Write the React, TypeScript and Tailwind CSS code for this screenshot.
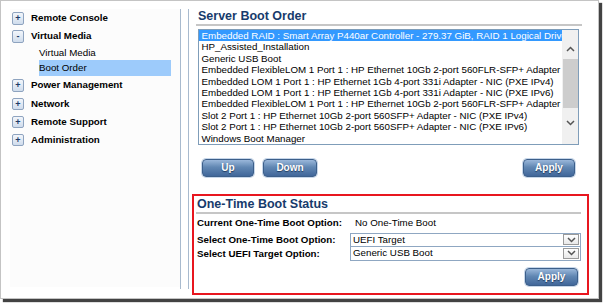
import React from "react";

const NAV = [
  { label: "Remote Console", open: false, h: "h-[18.5px]" },
  { label: "Virtual Media", open: true, h: "h-[17.5px]" },
];

const NAV_REST = [
  { label: "Power Management", h: "h-[19.5px]" },
  { label: "Network", h: "h-[18px]" },
  { label: "Remote Support", h: "h-[18px]" },
  { label: "Administration", h: "h-[18px]" },
];

const BOOT_ITEMS = [
  "Embedded RAID : Smart Array P440ar Controller - 279.37 GiB, RAID 1 Logical Drive",
  "HP_Assisted_Installation",
  "Generic USB Boot",
  "Embedded FlexibleLOM 1 Port 1 : HP Ethernet 10Gb 2-port 560FLR-SFP+ Adapter - NIC (PXE IPv4)",
  "Embedded LOM 1 Port 1 : HP Ethernet 1Gb 4-port 331i Adapter - NIC (PXE IPv4)",
  "Embedded LOM 1 Port 1 : HP Ethernet 1Gb 4-port 331i Adapter - NIC (PXE IPv6)",
  "Embedded FlexibleLOM 1 Port 1 : HP Ethernet 10Gb 2-port 560FLR-SFP+ Adapter - NIC (PXE IPv6)",
  "Slot 2 Port 1 : HP Ethernet 10Gb 2-port 560SFP+ Adapter - NIC (PXE IPv4)",
  "Slot 2 Port 1 : HP Ethernet 10Gb 2-port 560SFP+ Adapter - NIC (PXE IPv6)",
  "Windows Boot Manager",
];

// small +/- box used by the tree nav
function ToggleBox({ open }: { open: boolean }) {
  return (
    <span className="w-[12px] h-[12.5px] mr-[7px] rounded-[2px] border border-[#8ea3bf] bg-[linear-gradient(#f2f6fb,#cfdcec)] flex items-center justify-center text-[#1b3a66] text-[9px] font-bold leading-none">
      {open ? "-" : "+"}
    </span>
  );
}

function Chevron({ up = false }: { up?: boolean }) {
  return (
    <svg width="9" height="6" viewBox="0 0 9 6">
      <polyline
        points={up ? "1,5 4.5,1.5 8,5" : "1,1 4.5,4.5 8,1"}
        fill="none"
        stroke="#555"
        strokeWidth="1.5"
      />
    </svg>
  );
}

function BlueButton({ label, w }: { label: string; w: string }) {
  return (
    <button
      className={`${w} h-[18px] rounded-[4px] border border-[#3c5f8a] shadow-[0_0_0_1px_#c7d7ea] bg-[linear-gradient(#9ab7da,#6187b3_45%,#41679a)] text-white text-[10px] font-bold leading-none [text-shadow:0_1px_1px_#1f3a5e]`}
    >
      {label}
    </button>
  );
}

function SelectBox({ value, extra = "" }: { value: string; extra?: string }) {
  return (
    <div className={`w-[231px] h-[14.5px] border border-[#8fa7c2] bg-white flex items-center ${extra}`}>
      <span className="flex-1 pl-[2px] text-[9.75px] leading-none text-black">{value}</span>
      <span className="w-[16px] h-[11px] mr-[1px] border border-[#9a9a9a] bg-[linear-gradient(#ffffff,#e9e9e9)] flex items-center justify-center">
        <Chevron />
      </span>
    </div>
  );
}

export default function App() {
  return (
    <div className="w-[604px] h-[304px] bg-white font-['Liberation_Sans',Arial,sans-serif] text-black">
      <div className="w-[599px] h-[299px] border border-[#c4c4c4] bg-white shadow-[3px_3px_1px_rgba(45,45,45,0.9)] flex">
        {/* ── Tree navigation ── */}
        <div className="w-[179px] pt-[8px]">
          <div className="ml-[9px] h-[278px] bg-[#fcfcfc]">
            {NAV.map(n => (
              <div key={n.label} className={`${n.h} pl-[2px] flex items-center`}>
                <ToggleBox open={n.open} />
                <span className="text-[9.75px] font-bold leading-none">{n.label}</span>
              </div>
            ))}
            <div className="h-[15px] ml-[29px] flex items-center text-[9.75px] leading-none">Virtual Media</div>
            <div className="h-[15.5px] ml-[29px] w-[132px] bg-[#9dcbfb] flex items-center text-[9.75px] leading-none">
              Boot Order
            </div>
            {NAV_REST.map(n => (
              <div key={n.label} className={`${n.h} pl-[2px] flex items-center`}>
                <ToggleBox open={false} />
                <span className="text-[9.75px] font-bold leading-none">{n.label}</span>
              </div>
            ))}
          </div>
        </div>

        {/* frame divider */}
        <div className="w-[9px] pt-[8px] flex">
          <div className="w-[1px] h-[280px] bg-[#a8bace]" />
          <div className="w-[7px]" />
          <div className="w-[1px] h-[280px] bg-[#a8bace]" />
        </div>

        {/* ── Main panel ── */}
        <div className="flex-1 pt-[8px]">
          <div className="pl-[7px]">
            <div className="w-[386px] border-b-2 border-[#c6c6c6]">
              <h2 className="pl-[2px] text-[12.5px] leading-[14.5px] font-bold text-[#173b6c]">Server Boot Order</h2>
            </div>

            {/* boot order listbox */}
            <div className="mt-[3.5px] ml-[2px] w-[381px] h-[116px] border border-[#7f9db9] bg-white flex overflow-hidden">
              <div className="w-[363px] overflow-hidden">
                {BOOT_ITEMS.map((item, i) => (
                  <div
                    key={i}
                    className={`h-[11.44px] pl-[2.5px] flex items-center whitespace-nowrap text-[9.75px] leading-none ${
                      i === 0 ? "bg-[#3399ff] text-white" : "text-black"
                    }`}
                  >
                    {item}
                  </div>
                ))}
              </div>
              <div className="w-[16px] bg-[#f0f0f0] flex flex-col items-center">
                <div className="h-[29px] flex items-end pb-[7px]">
                  <Chevron up />
                </div>
                <div className="w-[15px] h-[49px] bg-[#cdcdcd]" />
                <div className="pt-[12px]">
                  <Chevron />
                </div>
              </div>
            </div>

            <div className="mt-[9px] w-[379px] flex items-center">
              <div className="ml-[6px]">
                <BlueButton label="Up" w="w-[52px]" />
              </div>
              <div className="ml-[9px]">
                <BlueButton label="Down" w="w-[54px]" />
              </div>
              <div className="ml-auto">
                <BlueButton label="Apply" w="w-[52px]" />
              </div>
            </div>
          </div>

          {/* ── One-Time Boot Status (highlighted) ── */}
          <div className="mt-[15.5px] ml-[3px] w-[397px] h-[101px] border-2 border-[#e8161f]">
            <div className="mx-[2px] w-[385px] border-b-2 border-[#c6c6c6] pt-[1px]">
              <h2 className="pl-[1px] text-[12.5px] leading-[15px] font-bold text-[#173b6c]">One-Time Boot Status</h2>
            </div>
            <div className="pl-[3px]">
              <div className="h-[18px] flex items-center text-[9.75px] leading-none">
                <span className="w-[153px] font-bold">Current One-Time Boot Option:</span>
                <span className="pl-[5px]">No One-Time Boot</span>
              </div>
              <div className="mt-[1px] flex items-center text-[9.75px] leading-none">
                <span className="w-[153px] font-bold">Select One-Time Boot Option:</span>
                <SelectBox value="UEFI Target" />
              </div>
              <div className="flex items-center text-[9.75px] leading-none">
                <span className="w-[153px] font-bold">Select UEFI Target Option:</span>
                <SelectBox value="Generic USB Boot" extra="-mt-px" />
              </div>
              <div className="mt-[7px] mr-[9px] flex justify-end">
                <BlueButton label="Apply" w="w-[53px]" />
              </div>
            </div>
          </div>
        </div>
      </div>
    </div>
  );
}
